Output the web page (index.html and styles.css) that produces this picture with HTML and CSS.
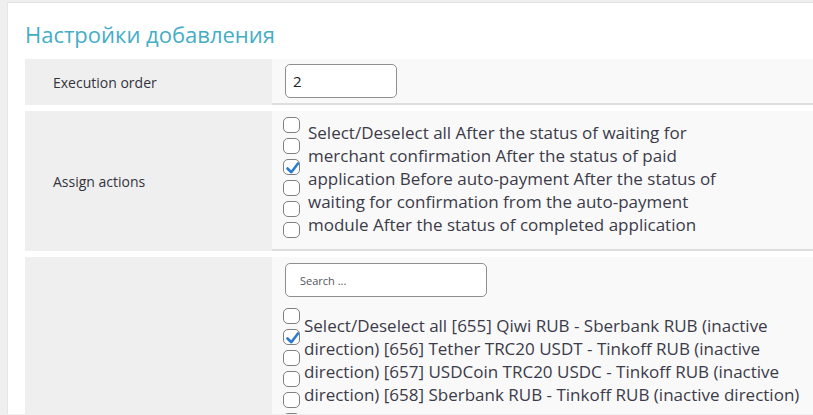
FILE: index.html
```html
<!DOCTYPE html>
<html lang="ru">
<head>
<meta charset="utf-8">
<title>Настройки добавления</title>
<link rel="stylesheet" href="styles.css">
</head>
<body>
<div class="panel">
  <h2 class="title">Настройки добавления</h2>
  <div class="table">
    <div class="row row-order">
      <div class="label">Execution order</div>
      <div class="field field-order">
        <input class="num-input" type="text" value="2">
      </div>
    </div>
    <div class="row row-actions">
      <div class="label">Assign actions</div>
      <div class="field field-list">
        <div class="boxes">
          <span class="box"></span>
          <span class="box"></span>
          <span class="box checked"><svg viewBox="0 0 16 16" width="16" height="16"><path d="M2.5 8.5 L6.3 12.2 L13 3.5" fill="none" stroke="#2b7bd0" stroke-width="2.6" stroke-linecap="round" stroke-linejoin="round"/></svg></span>
          <span class="box"></span>
          <span class="box"></span>
          <span class="box"></span>
        </div>
        <div class="list-text text-actions">Select/Deselect all After the status of waiting for merchant confirmation After the status of paid application Before auto-payment After the status of waiting for confirmation from the auto-payment module After the status of completed application</div>
      </div>
    </div>
    <div class="row row-dirs">
      <div class="label"></div>
      <div class="field field-dirs">
        <input class="search" type="text" placeholder="Search ...">
        <div class="list">
          <div class="boxes">
            <span class="box"></span>
            <span class="box checked"><svg viewBox="0 0 16 16" width="16" height="16"><path d="M2.5 8.5 L6.3 12.2 L13 3.5" fill="none" stroke="#2b7bd0" stroke-width="2.6" stroke-linecap="round" stroke-linejoin="round"/></svg></span>
            <span class="box"></span>
            <span class="box"></span>
            <span class="box"></span>
            <span class="box"></span>
          </div>
          <div class="list-text text-dirs">Select/Deselect all [655] Qiwi RUB - Sberbank RUB (inactive direction) [656] Tether TRC20 USDT - Tinkoff RUB (inactive direction) [657] USDCoin TRC20 USDC - Tinkoff RUB (inactive direction) [658] Sberbank RUB - Tinkoff RUB (inactive direction)</div>
        </div>
      </div>
    </div>
  </div>
</div>
</body>
</html>
```

FILE: styles.css
```css
html, body {
  margin: 0;
  padding: 0;
}
body {
  background: #efefef;
  font-family: "Open Sans", "Noto Sans", sans-serif;
  color: #3e3e48;
  height: 415px;
  overflow: hidden;
}
.panel {
  margin: 2px 0 0 7px;
  background: #ffffff;
  border-top: 1px solid #e2e2e2;
  border-left: 1px solid #e6e6e6;
  padding: 0 0 0 17px;
  height: 412px;
  box-sizing: border-box;
  overflow: hidden;
}
.title {
  margin: 16px 0 10px 0;
  font-size: 22px;
  line-height: 30px;
  font-weight: 400;
  color: #45adc6;
}
.table {
  display: flex;
  flex-direction: column;
  gap: 6px;
}
.row {
  display: flex;
}
.label {
  width: 247px;
  flex: none;
  background: #efefef;
  padding-left: 28px;
  box-sizing: border-box;
  display: flex;
  align-items: center;
  font-size: 14px;
  color: #33333d;
}
.field {
  flex: 1;
  background: #f9f9f9;
  border-bottom: 2px solid #dedede;
  box-sizing: border-box;
}
.row-order { height: 46px; }
.row-actions { height: 140px; }
.row-dirs { height: 159px; overflow: hidden; }
.row-dirs .field { border-bottom: none; }
.field-order {
  padding: 5px 0 0 13px;
}
.num-input {
  width: 112px;
  height: 34px;
  box-sizing: border-box;
  border: 1px solid #8f8f8f;
  border-radius: 5px;
  background: #fff;
  padding: 0 0 0 7px;
  font-family: "Open Sans", sans-serif;
  font-size: 15px;
  color: #222;
  outline: none;
}
.field-list {
  display: flex;
  align-items: flex-start;
  padding: 6px 0 0 11px;
}
.boxes {
  display: flex;
  flex-direction: column;
  gap: 5px;
  flex: none;
}
.field-list .boxes { width: 25px; }
.box {
  display: block;
  width: 17px;
  height: 16px;
  box-sizing: border-box;
  border: 1px solid #808080;
  border-radius: 5px;
  background: #fff;
  position: relative;
}
.box svg {
  position: absolute;
  left: 1px;
  top: 0;
}
.list-text {
  font-size: 17px;
  line-height: 23px;
  color: #3c3b4a;
}
.text-actions {
  width: 430px;
  margin-top: 4px;
}
.field-dirs {
  padding: 6px 0 0 13px;
}
.search {
  display: block;
  width: 202px;
  height: 34px;
  box-sizing: border-box;
  border: 1px solid #8f8f8f;
  border-radius: 5px;
  background: #fff;
  padding: 0 0 0 14px;
  font-family: "Open Sans", sans-serif;
  font-size: 11px;
  outline: none;
}
.search::placeholder {
  color: #555560;
}
.list {
  display: flex;
  align-items: flex-start;
  margin: 11px 0 0 -2px;
}
.list .boxes { width: 21px; }
.text-dirs {
  width: 512px;
  margin-top: 6px;
}
```
